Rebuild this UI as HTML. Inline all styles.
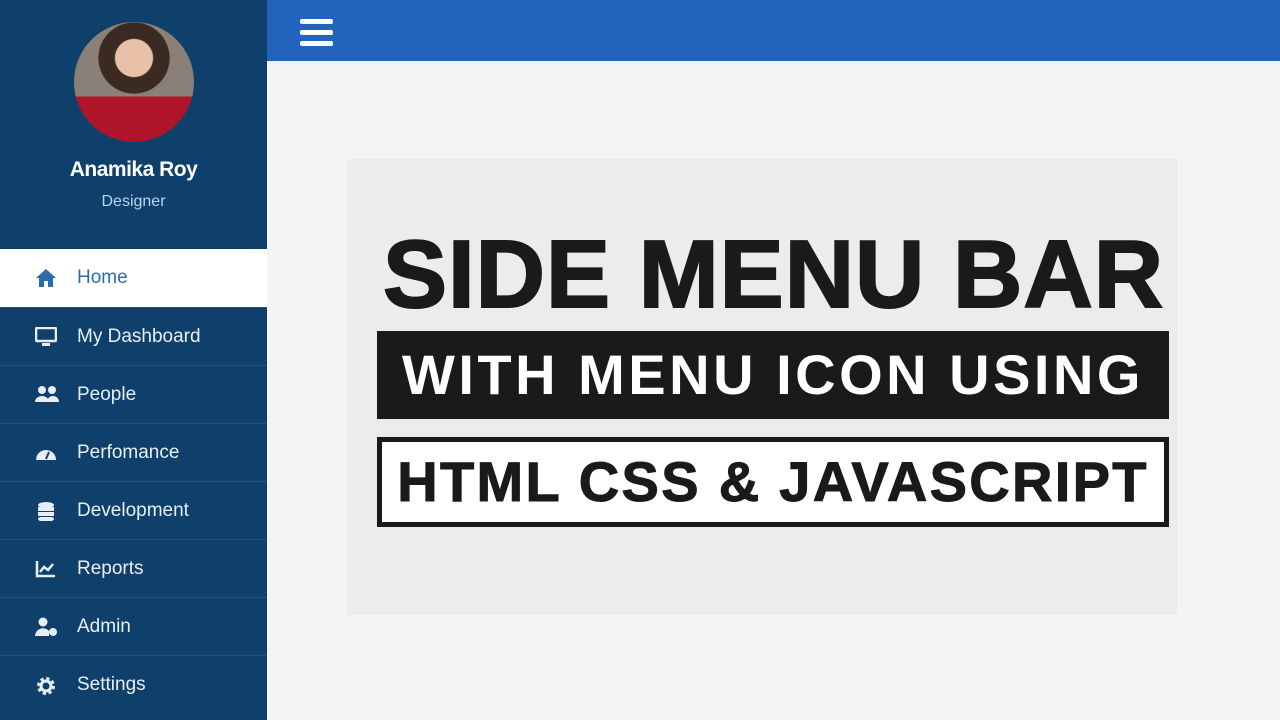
<!DOCTYPE html>
<html><head><meta charset="utf-8"><style>
*{margin:0;padding:0;box-sizing:border-box}
body{width:1280px;height:720px;overflow:hidden;background:#f4f4f4;font-family:"Liberation Sans",sans-serif;position:relative}
.side{position:absolute;left:0;top:0;width:267px;height:720px;background:#0f406c}
.av{position:absolute;left:74px;top:22px;width:120px;height:120px;border-radius:50%;background:radial-gradient(circle at 50% 30%,#e8c0a8 0 18%,#3a2a22 19% 34%,transparent 35%),linear-gradient(#8a8078 0 62%,#b0142a 62%);overflow:hidden}
.name{position:absolute;top:158px;width:267px;text-align:center;color:#fff;font-weight:bold;font-size:21px;letter-spacing:-0.5px}
.role{position:absolute;top:193px;width:267px;text-align:center;color:#b9d4ee;font-size:16px}
.item{position:absolute;left:0;width:267px;height:58px;border-top:1px solid #1d5283;color:#e8eef5;font-size:19px;line-height:57px;padding-left:77px}
.item.act{background:#fff;color:#2b6cae;border-top:0}
.item svg{position:absolute;left:35px;top:19px}
.top{position:absolute;left:267px;top:0;width:1013px;height:61px;background:#2263bd}
.bar{position:absolute;left:300px;width:33px;height:5px;border-radius:2px;background:#fff}
.box{position:absolute;left:347px;top:159px;width:830px;height:456px;background:#ececec}
.t1{position:absolute;left:377px;top:220px;width:793px;text-align:center;font-size:96px;font-weight:bold;color:#1a1a1a;letter-spacing:1px;white-space:nowrap;-webkit-text-stroke:2px #1a1a1a}
.t2{position:absolute;left:377px;top:331px;width:792px;height:88px;background:#1a1a1a;color:#fff;font-size:56px;font-weight:bold;text-align:center;line-height:88px;white-space:nowrap;letter-spacing:3.5px}
.t3{position:absolute;left:377px;top:437px;width:792px;height:90px;border:5px solid #1a1a1a;background:#fff;color:#1a1a1a;font-size:56px;font-weight:bold;text-align:center;line-height:80px;white-space:nowrap;letter-spacing:2.3px;-webkit-text-stroke:1px #1a1a1a}
</style></head><body>
<div class="side">
<div class="av"></div>
<div class="name">Anamika Roy</div>
<div class="role">Designer</div>
<div class="item act" style="top:249px"><svg width="22" height="20" viewBox="0 0 22 20"><path d="M11 1L1 10h3v9h5v-6h4v6h5v-9h3z" fill="#2b6cae"/></svg>Home</div>
<div class="item" style="top:307px"><svg width="22" height="20" viewBox="0 0 22 20"><rect x="1" y="1" width="20" height="13" rx="1" fill="none" stroke="#e8eef5" stroke-width="2.5"/><rect x="7" y="16" width="8" height="3" fill="#e8eef5"/></svg>My Dashboard</div>
<div class="item" style="top:365px"><svg width="24" height="20" viewBox="0 0 24 20"><circle cx="7" cy="5" r="4" fill="#e8eef5"/><circle cx="17" cy="5" r="4" fill="#e8eef5"/><path d="M0 17a7 6 0 0 1 14 0zM12 17a6 6 0 0 1 12 0z" fill="#e8eef5"/></svg>People</div>
<div class="item" style="top:423px"><svg width="22" height="20" viewBox="0 0 22 20"><path d="M1 17a10 10 0 1 1 20 0z" fill="#e8eef5"/><path d="M11 16l3-7" stroke="#0f406c" stroke-width="2"/></svg>Perfomance</div>
<div class="item" style="top:481px"><svg width="22" height="22" viewBox="0 0 22 22"><ellipse cx="11" cy="4" rx="8" ry="3" fill="#e8eef5"/><rect x="3" y="6" width="16" height="4" fill="#e8eef5"/><rect x="3" y="11" width="16" height="4" fill="#e8eef5"/><rect x="3" y="16" width="16" height="4" rx="3" fill="#e8eef5"/></svg>Development</div>
<div class="item" style="top:539px"><svg width="22" height="20" viewBox="0 0 22 20"><path d="M2 2v15h18" fill="none" stroke="#e8eef5" stroke-width="2.5"/><path d="M5 13l4-5 4 3 5-6" fill="none" stroke="#e8eef5" stroke-width="2.5"/></svg>Reports</div>
<div class="item" style="top:597px"><svg width="24" height="20" viewBox="0 0 24 20"><circle cx="8" cy="5" r="4.5" fill="#e8eef5"/><path d="M0 19a8 8 0 0 1 14 -5v5z" fill="#e8eef5"/><circle cx="18" cy="15" r="4" fill="#e8eef5"/></svg>Admin</div>
<div class="item" style="top:655px"><svg width="22" height="22" viewBox="0 0 22 22"><circle cx="11" cy="11" r="7" fill="none" stroke="#e8eef5" stroke-width="4" stroke-dasharray="3 2.5"/><circle cx="11" cy="11" r="5" fill="none" stroke="#e8eef5" stroke-width="3"/></svg>Settings</div>
</div>
<div class="top"></div>
<div class="bar" style="top:19px"></div><div class="bar" style="top:30px"></div><div class="bar" style="top:41px"></div>
<div class="box"></div>
<div class="t1">SIDE MENU BAR</div>
<div class="t2">WITH MENU ICON USING</div>
<div class="t3">HTML CSS &amp; JAVASCRIPT</div>
</body></html>
